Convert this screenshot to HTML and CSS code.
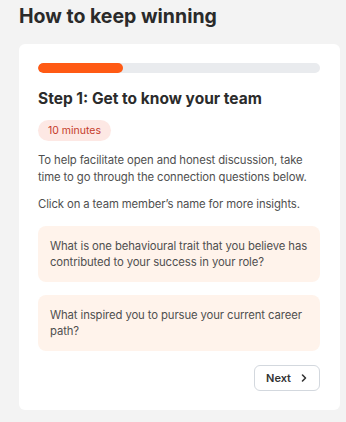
FILE: index.html
```html
<!DOCTYPE html>
<html lang="en">
<head>
    <meta charset="UTF-8">
    <meta name="viewport" content="width=device-width, initial-scale=1.0">
    <title>How to keep winning</title>
    <link rel="stylesheet" href="styles.css">
</head>
<body>
    <h1 class="page-title">How to keep winning</h1>
    <div class="card">
        <div class="progress"><div class="progress-fill" style="width: 30%"></div></div>
        <h2 class="step-title">Step 1: Get to know your team</h2>
        <span class="badge">10 minutes</span>
        <p class="text">To help facilitate open and honest discussion, take time to go through the connection questions below.</p>
        <p class="text">Click on a team member’s name for more insights.</p>
        <div class="question">What is one behavioural trait that you believe has contributed to your success in your role?</div>
        <div class="question">What inspired you to pursue your current career path?</div>
        <div class="actions">
            <button class="next-btn">Next
                <svg width="10" height="10" viewBox="0 0 10 10"><path d="M3.5 2 L6.5 5 L3.5 8" fill="none" stroke="#333" stroke-width="1.6" stroke-linecap="round" stroke-linejoin="round"/></svg>
            </button>
        </div>
    </div>
</body>
</html>
```

FILE: styles.css
```css
body {
    margin: 0;
    padding: 0 6px 0 19px;
    background-color: #f3f3f3;
    font-family: Inter, "Noto Sans", sans-serif;
    color: #2b2b2b;
}
.page-title {
    margin: 0;
    padding-top: 4px;
    height: 40px;
    font-size: 19.5px;
    font-weight: 700;
    color: #2a2a2a;
}
.card {
    background-color: #fff;
    border-radius: 6px;
    padding: 19px 20px 19px 19px;
    display: flex;
    flex-direction: column;
    align-items: flex-start;
}
.progress {
    width: 100%;
    height: 10px;
    border-radius: 5px;
    background-color: #e9ebee;
    overflow: hidden;
}
.progress-fill {
    height: 100%;
    border-radius: 5px;
    background-color: #ff5a14;
}
.step-title {
    margin: 16px 0 12px;
    font-size: 15.5px;
    font-weight: 700;
    color: #2b2b2b;
}
.badge {
    background-color: #fde8e4;
    color: #c53b2a;
    font-size: 10.5px;
    padding: 4px 10px;
    border-radius: 11px;
}
.text {
    margin: 11px 0 0;
    font-size: 11.3px;
    line-height: 16.5px;
    letter-spacing: -0.1px;
    color: #4f4f4f;
}
.question {
    box-sizing: border-box;
    width: 100%;
    margin-top: 13px;
    background-color: #fff3eb;
    border-radius: 8px;
    padding: 12px 12px;
    font-size: 11.3px;
    line-height: 16px;
    letter-spacing: -0.1px;
    color: #4f4f4f;
}
.actions {
    width: 100%;
    display: flex;
    justify-content: flex-end;
    margin-top: 14px;
}
.next-btn {
    display: flex;
    align-items: center;
    gap: 8px;
    height: 26px;
    padding: 0 10px 0 11px;
    background-color: #fff;
    border: 1px solid #d3d8de;
    border-radius: 6px;
    font-family: inherit;
    font-size: 11px;
    font-weight: 600;
    color: #333;
}
```
